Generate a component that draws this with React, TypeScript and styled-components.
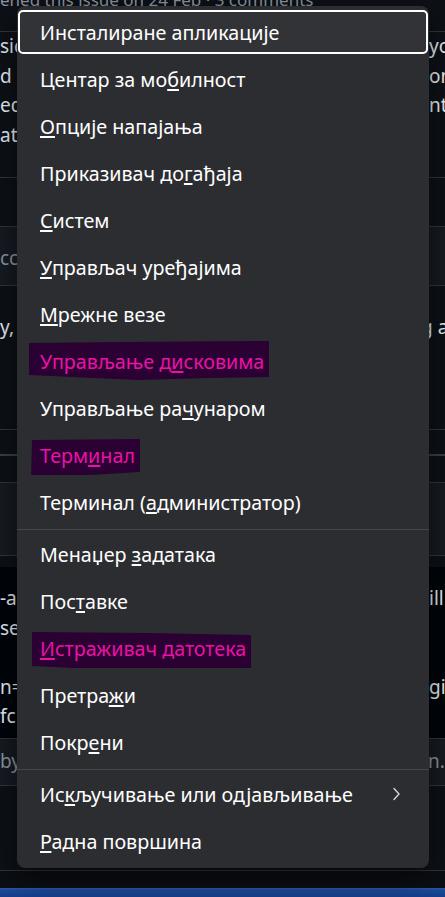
import { createGlobalStyle, styled } from 'styled-components';

const GlobalStyle = createGlobalStyle`
  html, body {
    margin: 0;
    padding: 0;
    background: #0d1117;
  }
  body {
    width: 445px;
    height: 897px;
    overflow: hidden;
  }
`;

const Screen = styled.div`
  position: relative;
  width: 445px;
  height: 897px;
  overflow: hidden;
  background: #0d1117;
  font-family: "Noto Sans", "Open Sans", sans-serif;
  display: flex;
  flex-direction: column;
`;

/* ---------- page behind the menu ---------- */

interface PBand {
  $h: number;
  $bg?: string;
  $line?: string;
  $lineW?: number;
  $top?: string;
}

const Band = styled.div<PBand>`
  flex: none;
  height: ${p => p.$h}px;
  box-sizing: border-box;
  background: ${p => p.$bg ?? 'transparent'};
  border-bottom: ${p => (p.$line ? `${p.$lineW ?? 1}px solid ${p.$line}` : 'none')};
  border-top: ${p => (p.$top ? `1px solid ${p.$top}` : 'none')};
  display: flex;
  flex-direction: column;
  justify-content: ${p => (p.$top ? 'center' : 'flex-start')};
`;

const Meta = styled.div`
  font-size: 17px;
  line-height: 0;
  color: #8b949e;
  white-space: nowrap;
`;

interface PLine {
  $split?: number;
  $color?: string;
}

const Line = styled.div<PLine>`
  display: grid;
  grid-template-columns: ${p => p.$split ?? 429}px 1fr;
  height: 29.5px;
  line-height: 29.5px;
  font-size: 19px;
  color: ${p => p.$color ?? '#e6edf3'};
  white-space: nowrap;
  overflow: hidden;
`;

const Spacer = styled.div<{ $h: number }>`
  flex: none;
  height: ${p => p.$h}px;
`;

const Taskbar = styled.div`
  flex: none;
  height: 9px;
  background: linear-gradient(180deg, #2a5cb3 0px, #1c4a9c 2px, #163f8a 100%);
`;

/* ---------- the Win+X menu ---------- */

const Menu = styled.nav`
  position: absolute;
  top: 6px;
  left: 17px;
  width: 412px;
  box-sizing: border-box;
  padding: 4px 1px 5px;
  background: #2c2d31;
  border-radius: 8px;
  box-shadow: 0 10px 28px rgba(0, 0, 0, 0.55);
  display: flex;
  flex-direction: column;
  gap: 3px;
  font-family: "Noto Sans", "Open Sans", sans-serif;
  font-size: 19.7px;
  color: #ffffff;
`;

interface PItem {
  $focus?: boolean;
  $markPad?: number;
}

const Item = styled.div<PItem>`
  flex: none;
  height: 44px;
  box-sizing: border-box;
  display: flex;
  align-items: center;
  padding: 0 25px 0 ${p => 20 - (p.$markPad ?? 0)}px;
  border-radius: 5px;
  border: 2px solid ${p => (p.$focus ? '#ffffff' : 'transparent')};
  background: ${p => (p.$focus ? 'rgba(255,255,255,0.03)' : 'transparent')};
  white-space: nowrap;
`;

const Key = styled.span`
  text-decoration: underline;
  text-decoration-thickness: 1.5px;
  text-underline-offset: 2px;
`;

interface PMark {
  $pl: number;
  $clip: string;
}

const Mark = styled.span<PMark>`
  align-self: stretch;
  display: flex;
  align-items: center;
  padding: 0 5px 0 ${p => p.$pl}px;
  background: #2b0134;
  color: #ea12a4;
  clip-path: polygon(${p => p.$clip});
`;

const Separator = styled.div`
  flex: none;
  height: 1px;
  margin: 2px -1px -1px;
  background: #45474c;
`;

const Chevron = styled.svg`
  margin-left: auto;
  flex: none;
`;

type Entry =
  | { sep: true }
  | { label: string; focus?: boolean; sub?: boolean; mark?: { pl: number; clip: string } };

const entries: Entry[] = [
  { label: 'Инсталиране апликације', focus: true },
  { label: 'Центар за мо&билност' },
  { label: '&Опције напајања' },
  { label: 'Приказивач до&гађаја' },
  { label: '&Систем' },
  { label: '&Управљач уређајима' },
  { label: '&Мрежне везе' },
  {
    label: 'Управљање д&исковима',
    mark: { pl: 11, clip: '0 2px, 38% 1px, 100% 0, 100% 36px, 75% 37px, 45% 39px, 0 34px' },
  },
  { label: 'Управљање ра&чунаром' },
  {
    label: 'Терм&инал',
    mark: { pl: 9, clip: '1px 5px, 100% 4px, 100% 37px, 55% 40px, 0 44px' },
  },
  { label: 'Терминал (&администратор)' },
  { sep: true },
  { label: 'Менаџер &задатака' },
  { label: 'Пос&тавке' },
  {
    label: '&Истраживач датотека',
    mark: { pl: 8, clip: '0 4px, 53% 5px, 100% 7px, 100% 42px, 57% 44px, 0 38px' },
  },
  { label: 'Претра&жи' },
  { label: 'Покр&ени' },
  { sep: true },
  { label: 'Ис&кључивање или одјављивање', sub: true },
  { label: '&Радна површина' },
];

function Label({ text }: { text: string }) {
  const i = text.indexOf('&');
  if (i < 0) return <span>{text}</span>;
  return (
    <span>
      {text.slice(0, i)}
      <Key>{text.charAt(i + 1)}</Key>
      {text.slice(i + 2)}
    </span>
  );
}

function App() {
  return (
    <Screen>
      <GlobalStyle />

      <Band $h={32} $line="#30363d">
        <Meta>ened this issue on 24 Feb · 3 comments</Meta>
      </Band>
      <Band $h={146} $line="#30363d">
        <Line><span>sic</span><span>you</span></Line>
        <Line><span>d</span><span>on</span></Line>
        <Line><span>ed</span><span>nte</span></Line>
        <Line><span>at</span><span /></Line>
      </Band>
      <Band $h={49} $line="#30363d" />
      <Band $h={59} $bg="#161b22" $line="#30363d">
        <Spacer $h={17} />
        <Line $color="#8b949e"><span>cc</span><span /></Line>
      </Band>
      <Band $h={144} $line="#30363d">
        <Spacer $h={27} />
        <Line $split={421}><span>y, t</span><span>g a</span></Line>
      </Band>
      <Band $h={26} $line="#3a4048" $lineW={2} />
      <Band $h={27} $line="#30363d" />
      <Band $h={73} $bg="#161b22" $line="#30363d" />
      <Band $h={11} />
      <Band $h={171} $bg="#010409">
        <Spacer $h={17} />
        <Line><span>-a</span><span>ill</span></Line>
        <Line><span>se</span><span /></Line>
        <Line><span /><span /></Line>
        <Line><span>n=</span><span>git</span></Line>
        <Line><span>fc</span><span /></Line>
      </Band>
      <Band $h={48} $bg="#161b22" $line="#30363d" $top="#30363d">
        <Line $color="#8b949e" $split={428}><span>by</span><span>n.</span></Line>
      </Band>
      <Band $h={85} $line="#30363d" />
      <Band $h={17} $bg="#0b0e13" />
      <Taskbar />

      <Menu>
        {entries.map((e, idx) =>
          'sep' in e ? (
            <Separator key={idx} />
          ) : (
            <Item key={idx} $focus={e.focus} $markPad={e.mark?.pl}>
              {e.mark ? (
                <Mark $pl={e.mark.pl} $clip={e.mark.clip}>
                  <Label text={e.label} />
                </Mark>
              ) : (
                <Label text={e.label} />
              )}
              {e.sub && (
                <Chevron width="9" height="14" viewBox="0 0 9 14">
                  <path d="M2 1.5 L7 7 L2 12.5" fill="none" stroke="#d6d6d6" strokeWidth="1.4" strokeLinecap="round" strokeLinejoin="round" />
                </Chevron>
              )}
            </Item>
          )
        )}
      </Menu>
    </Screen>
  );
}

export default App;
